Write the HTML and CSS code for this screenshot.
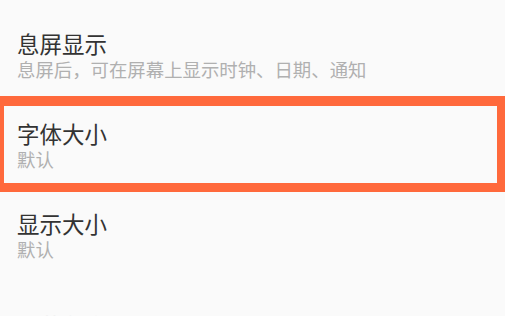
FILE: index.html
```html
<!DOCTYPE html>
<html lang="zh-CN">
<head>
<meta charset="utf-8">
<link rel="stylesheet" href="styles.css">
</head>
<body>
<ul class="settings">
  <li class="item">
    <div class="title">息屏显示</div>
    <div class="desc">息屏后，可在屏幕上显示时钟、日期、通知</div>
  </li>
  <li class="item item-marked">
    <div class="title">字体大小</div>
    <div class="desc">默认</div>
    <span class="mark"></span>
  </li>
  <li class="item">
    <div class="title">显示大小</div>
    <div class="desc">默认</div>
  </li>
  <li class="item item-faded">
    <div class="title">屏幕色彩</div>
  </li>
</ul>
</body>
</html>
```
FILE: styles.css
```css
html, body {
  margin: 0;
  padding: 0;
  background: #fafafa;
  overflow: hidden;
}
body {
  width: 505px;
  height: 316px;
  font-family: "Noto Sans CJK SC", "Noto Sans", sans-serif;
}
.settings {
  list-style: none;
  margin: 0;
  padding: 0;
}
.item {
  position: relative;
  height: 90px;
  box-sizing: border-box;
  padding: 29px 0 0 17px;
  display: flex;
  flex-direction: column;
}
.title {
  font-size: 22.5px;
  line-height: 29px;
  color: #333333;
}
.desc {
  font-size: 18.4px;
  line-height: 22px;
  color: #b0b0b0;
}
.item-faded {
  padding-top: 41px;
}
.item-faded .title {
  color: #ececec;
}
.mark {
  position: absolute;
  top: 6px;
  left: -4px;
  right: 0;
  height: 77px;
  border-style: solid;
  border-color: #ff693c;
  border-width: 10px 8px 9px 8px;
}
```
